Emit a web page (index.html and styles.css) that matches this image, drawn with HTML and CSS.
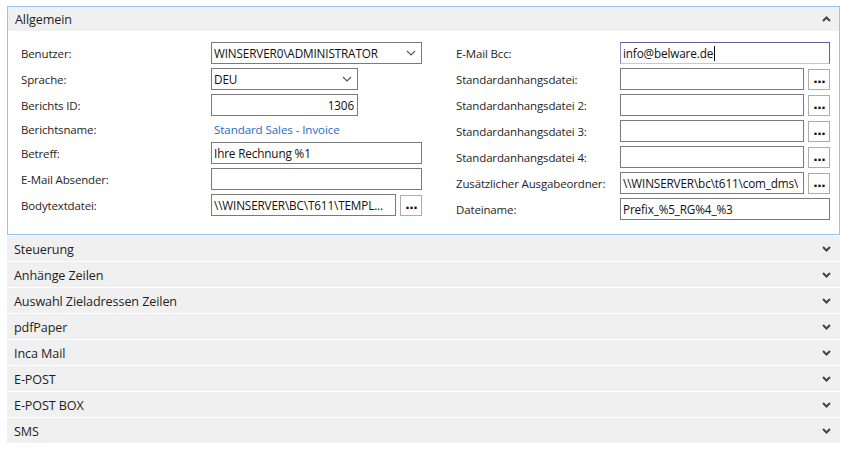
FILE: index.html
```html
<!DOCTYPE html>
<html lang="de">
<head>
<meta charset="utf-8">
<title>Allgemein</title>
<link rel="stylesheet" href="styles.css">
</head>
<body>
<div class="page">
  <section class="panel open">
    <div class="panel-head">
      <span class="panel-title">Allgemein</span>
      <svg class="chev" width="9" height="6" viewBox="0 0 9 6"><path d="M1 5 L4.5 1.5 L8 5" fill="none" stroke="#444" stroke-width="2"/></svg>
    </div>
    <div class="panel-body">
      <div class="col left">
        <div class="row"><span class="lbl">Benutzer:</span><div class="field sel w-full"><span class="val">WINSERVER0\ADMINISTRATOR</span><svg class="dd" width="10" height="6" viewBox="0 0 10 6"><path d="M1 1 L5 5 L9 1" fill="none" stroke="#555" stroke-width="1.1"/></svg></div></div>
        <div class="row"><span class="lbl">Sprache:</span><div class="field sel w-short"><span class="val">DEU</span><svg class="dd" width="10" height="6" viewBox="0 0 10 6"><path d="M1 1 L5 5 L9 1" fill="none" stroke="#555" stroke-width="1.1"/></svg></div></div>
        <div class="row"><span class="lbl">Berichts ID:</span><div class="field w-short num"><span class="val">1306</span></div></div>
        <div class="row text-row"><span class="lbl">Berichtsname:</span><span class="link">Standard Sales - Invoice</span></div>
        <div class="row"><span class="lbl">Betreff:</span><div class="field w-full"><span class="val">Ihre Rechnung %1</span></div></div>
        <div class="row"><span class="lbl">E-Mail Absender:</span><div class="field w-full"></div></div>
        <div class="row"><span class="lbl">Bodytextdatei:</span><div class="combo"><div class="field grow"><span class="val">\\WINSERVER\BC\T611\TEMPL...</span></div><button class="dots" type="button">...</button></div></div>
      </div>
      <div class="col right">
        <div class="row"><span class="lbl">E-Mail Bcc:</span><div class="field w-full focus"><span class="val">info@belware.de</span><span class="caret"></span></div></div>
        <div class="row"><span class="lbl">Standardanhangsdatei:</span><div class="combo"><div class="field grow"></div><button class="dots" type="button">...</button></div></div>
        <div class="row"><span class="lbl">Standardanhangsdatei 2:</span><div class="combo"><div class="field grow"></div><button class="dots" type="button">...</button></div></div>
        <div class="row"><span class="lbl">Standardanhangsdatei 3:</span><div class="combo"><div class="field grow"></div><button class="dots" type="button">...</button></div></div>
        <div class="row"><span class="lbl">Standardanhangsdatei 4:</span><div class="combo"><div class="field grow"></div><button class="dots" type="button">...</button></div></div>
        <div class="row"><span class="lbl">Zusätzlicher Ausgabeordner:</span><div class="combo"><div class="field grow"><span class="val clip">\\WINSERVER\bc\t611\com_dms\</span></div><button class="dots" type="button">...</button></div></div>
        <div class="row"><span class="lbl">Dateiname:</span><div class="field w-full"><span class="val">Prefix_%5_RG%4_%3</span></div></div>
      </div>
    </div>
  </section>
  <div class="panel closed"><span class="panel-title">Steuerung</span><svg class="chev" width="9" height="6" viewBox="0 0 9 6"><path d="M1 1 L4.5 4.5 L8 1" fill="none" stroke="#444" stroke-width="2"/></svg></div>
  <div class="panel closed"><span class="panel-title">Anhänge Zeilen</span><svg class="chev" width="9" height="6" viewBox="0 0 9 6"><path d="M1 1 L4.5 4.5 L8 1" fill="none" stroke="#444" stroke-width="2"/></svg></div>
  <div class="panel closed"><span class="panel-title">Auswahl Zieladressen Zeilen</span><svg class="chev" width="9" height="6" viewBox="0 0 9 6"><path d="M1 1 L4.5 4.5 L8 1" fill="none" stroke="#444" stroke-width="2"/></svg></div>
  <div class="panel closed"><span class="panel-title">pdfPaper</span><svg class="chev" width="9" height="6" viewBox="0 0 9 6"><path d="M1 1 L4.5 4.5 L8 1" fill="none" stroke="#444" stroke-width="2"/></svg></div>
  <div class="panel closed"><span class="panel-title">Inca Mail</span><svg class="chev" width="9" height="6" viewBox="0 0 9 6"><path d="M1 1 L4.5 4.5 L8 1" fill="none" stroke="#444" stroke-width="2"/></svg></div>
  <div class="panel closed"><span class="panel-title">E-POST</span><svg class="chev" width="9" height="6" viewBox="0 0 9 6"><path d="M1 1 L4.5 4.5 L8 1" fill="none" stroke="#444" stroke-width="2"/></svg></div>
  <div class="panel closed"><span class="panel-title">E-POST BOX</span><svg class="chev" width="9" height="6" viewBox="0 0 9 6"><path d="M1 1 L4.5 4.5 L8 1" fill="none" stroke="#444" stroke-width="2"/></svg></div>
  <div class="panel closed"><span class="panel-title">SMS</span><svg class="chev" width="9" height="6" viewBox="0 0 9 6"><path d="M1 1 L4.5 4.5 L8 1" fill="none" stroke="#444" stroke-width="2"/></svg></div>
</div>
</body>
</html>
```
FILE: styles.css
```css
html, body {
  margin: 0;
  padding: 0;
  background: #ffffff;
}
body {
  padding: 6px 6px 0 7px;
  font-family: "Open Sans", "Noto Sans", sans-serif;
  color: #1e1e1e;
}
.page {
  width: 833px;
  display: flex;
  flex-direction: column;
  gap: 1px;
}
.panel.open {
  border: 1px solid #99c1f1;
}
.panel-head,
.panel.closed {
  display: flex;
  align-items: center;
  justify-content: space-between;
  background: #f0f0f0;
  padding: 0 9px 0 7px;
}
.panel-head {
  height: 24px;
  padding-right: 8px;
}
.panel.closed {
  height: 25px;
}
.panel-title {
  font-size: 12.6px;
  color: #1e1e1e;
  letter-spacing: -0.1px;
  padding-top: 1px;
}
.chev {
  display: block;
}
.panel-body {
  display: grid;
  grid-template-columns: 401px 374px;
  column-gap: 34px;
  padding: 11px 9px 14px 13px;
}
.col {
  display: flex;
  flex-direction: column;
  gap: 4px;
}
.row {
  display: flex;
  align-items: center;
  height: 22px;
}
.row.text-row {
  height: 18px;
}
.lbl {
  font-size: 11.5px;
  flex: none;
  color: #1e1e1e;
  letter-spacing: -0.15px;
}
.left .lbl { width: 190px; }
.right .lbl { width: 164px; }
.link {
  font-size: 11.6px;
  color: #1f6cc7;
  letter-spacing: -0.1px;
  margin-left: 3px;
}
.field {
  box-sizing: border-box;
  height: 22px;
  border: 1px solid #7a7a7a;
  background: #fff;
  display: flex;
  align-items: center;
  padding: 0 3px 0 2px;
  font-size: 11.75px;
  letter-spacing: -0.15px;
  color: #111;
  overflow: hidden;
  white-space: nowrap;
}
.left .w-full { width: 211px; }
.right .w-full { width: 210px; }
.w-short { width: 147px; }
.sel { justify-content: space-between; padding-right: 5px; }
.num { justify-content: flex-end; }
.dd { display: block; flex: none; }
.combo {
  display: flex;
  gap: 4px;
  align-items: center;
}
.left .combo { width: 211px; }
.right .combo { width: 210px; }
.field.grow { flex: 1; }
.val.clip { overflow: hidden; }
.dots {
  box-sizing: border-box;
  width: 22px;
  height: 21px;
  border: 1px solid #adadad;
  background: #fff;
  padding: 0 0 4px 0;
  margin: 0;
  font-family: "DejaVu Sans", sans-serif;
  font-size: 13px;
  font-weight: bold;
  letter-spacing: -1px;
  line-height: 1;
  display: flex;
  align-items: flex-end;
  justify-content: center;
  color: #111;
}
.field.focus {
  border-color: #6a5aa8;
  border-bottom-color: #c9c3e4;
  border-left-color: #8f84c0;
}
.caret {
  display: inline-block;
  width: 1px;
  height: 15px;
  background: #000;
  margin-left: 1px;
}
```
